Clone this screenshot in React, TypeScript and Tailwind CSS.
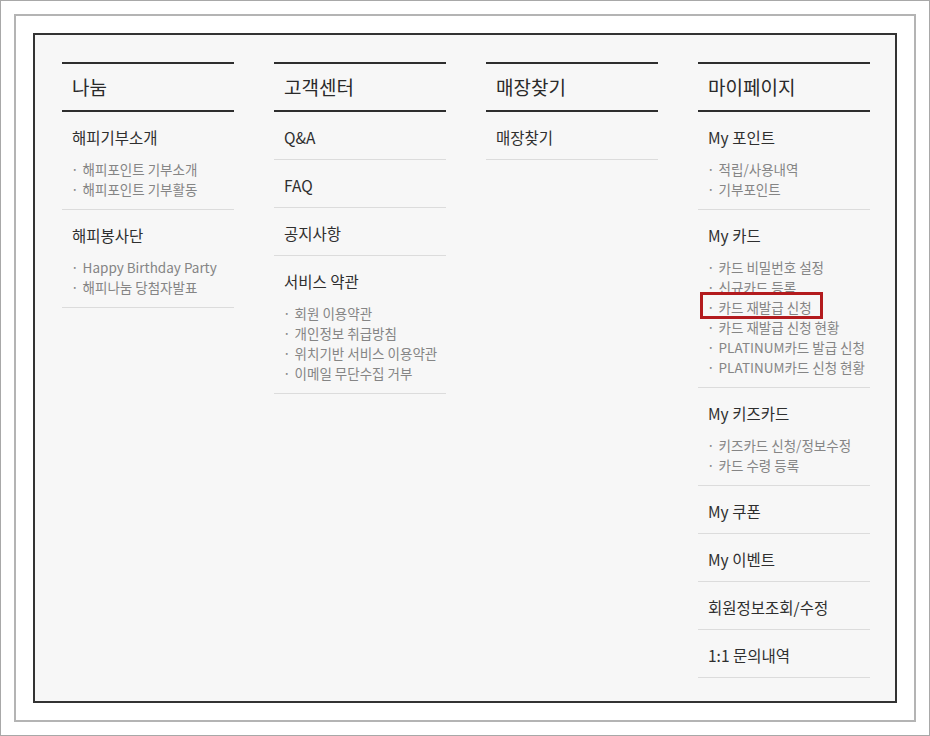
import React from "react";

type Item = { title: string; subs?: string[]; highlight?: number };
type Col = { header: string; items: Item[] };

const cols: Col[] = [
  {
    header: "나눔",
    items: [
      { title: "해피기부소개", subs: ["해피포인트 기부소개", "해피포인트 기부활동"] },
      { title: "해피봉사단", subs: ["Happy Birthday Party", "해피나눔 당첨자발표"] },
    ],
  },
  {
    header: "고객센터",
    items: [
      { title: "Q&A" },
      { title: "FAQ" },
      { title: "공지사항" },
      {
        title: "서비스 약관",
        subs: ["회원 이용약관", "개인정보 취급방침", "위치기반 서비스 이용약관", "이메일 무단수집 거부"],
      },
    ],
  },
  {
    header: "매장찾기",
    items: [{ title: "매장찾기" }],
  },
  {
    header: "마이페이지",
    items: [
      { title: "My 포인트", subs: ["적립/사용내역", "기부포인트"] },
      {
        title: "My 카드",
        subs: [
          "카드 비밀번호 설정",
          "신규카드 등록",
          "카드 재발급 신청",
          "카드 재발급 신청 현황",
          "PLATINUM카드 발급 신청",
          "PLATINUM카드 신청 현황",
        ],
        highlight: 2,
      },
      { title: "My 키즈카드", subs: ["키즈카드 신청/정보수정", "카드 수령 등록"] },
      { title: "My 쿠폰" },
      { title: "My 이벤트" },
      { title: "회원정보조회/수정" },
      { title: "1:1 문의내역" },
    ],
  },
];

export default function App() {
  return (
    <div
      className="w-[930px] h-[736px] bg-white border border-[#a8a8a8] p-[13px]"
      style={{ fontFamily: '"Noto Sans CJK KR", "Noto Sans", sans-serif' }}
    >
      <div className="w-full h-full border-2 border-[#b4b4b4] p-[17px]">
        <div className="w-full h-full border-2 border-[#333333] bg-[#f7f7f7] pl-[27px] pt-[27px] flex gap-[40px] items-start">
          {cols.map((c) => (
            <div key={c.header} className="w-[172px] border-t-2 border-[#2e2e2e]">
              <div className="h-[48px] flex items-center pl-[10px] pt-[1px] text-[19px] text-[#2a2a2a] border-b-2 border-[#2e2e2e]">
                {c.header}
              </div>
              {c.items.map((it) => (
                <div key={it.title} className="border-b border-[#dcdcdc]">
                  <div className="h-[47px] pt-[4px] flex items-center pl-[10px] text-[15.5px] text-[#2f2f2f]">
                    {it.title}
                  </div>
                  {it.subs && (
                    <div className="pb-[10px]">
                      {it.subs.map((s, i) => (
                        <div
                          key={s}
                          className="relative h-[20px] leading-[20px] pl-[9px] text-[13.5px] text-[#858585] whitespace-nowrap"
                        >
                          <span className="mr-[4px]">·</span>
                          {s}
                          {it.highlight === i && (
                            <div className="absolute left-[2px] top-[-5px] w-[123px] h-[27px] border-[3px] border-[#b31b1e]" />
                          )}
                        </div>
                      ))}
                    </div>
                  )}
                </div>
              ))}
            </div>
          ))}
        </div>
      </div>
    </div>
  );
}
